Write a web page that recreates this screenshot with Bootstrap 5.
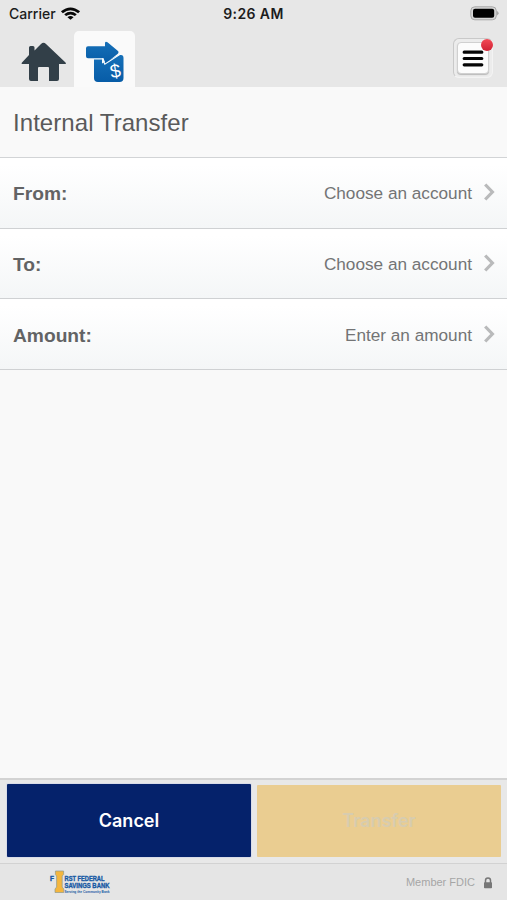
<!DOCTYPE html>
<html lang="en">
<head>
<meta charset="utf-8">
<meta name="viewport" content="width=device-width, initial-scale=1">
<title>Internal Transfer</title>
<link rel="stylesheet" href="https://cdn.jsdelivr.net/npm/bootstrap@5.3.0/dist/css/bootstrap.min.css">
<style>
body{font-family:"Liberation Sans",Arial,sans-serif;background:#f9f9f9;color:#595a5b;height:900px;overflow:hidden}
svg{display:block;flex:none}
.top-area{background:#e7e7e7;height:87px;flex:none}
.status{height:28px;font:500 14px/28px Inter,sans-serif;color:#1c1c1c;display:grid;grid-template-columns:1fr auto 1fr;padding:0 8px 0 9px}
.status-time{font-weight:600;letter-spacing:.4px;margin-right:1px}
.tabs-line{height:59px;padding:3px 13px 0 13px}
.tab-home{width:61px;padding:11px 0 0 8px}
.tab-transfer{width:61px;height:56px;background:#fafafa;border-radius:5px 5px 0 0;padding:10px 0 0 11px}
.menu-btn{width:40px;height:40px;margin-top:7px;margin-right:1px;border:1px solid;border-color:#c9c9c9 #f3f3f3 #f3f3f3 #c9c9c9;border-radius:6px;padding:3px;background:#ececec}
.menu-face{width:100%;height:100%;background:#fcfcfc;border:1px solid #d0d0d0;border-radius:4px;box-shadow:0 1px 1px #bbb}
.alert-dot{width:12px;height:12px;border-radius:50%;background:linear-gradient(#f34a56,#cf2133);top:0;right:-1px}
.page-title{font-size:24px;line-height:28px;height:71px;padding:22px 13px 0;margin:0;font-weight:400;border-bottom:1px solid #d2d4d6;letter-spacing:.06px;flex:none}
.list-group-flush>.list-group-item.field-row{height:70.7px;background:linear-gradient(#fff 10%,#f4f6f7);border:0;border-bottom:1px solid #cfd1d3;border-radius:0;padding:3px 12px 0 13px;color:#737475;font-size:17.2px}
.list-group-flush>.list-group-item.field-row:last-child{border-bottom-width:1px}
.field-label{font-size:19.2px;font-weight:700;color:#626364;padding-top:1px}
.field-row svg{margin-left:12px;margin-bottom:4px}
.actions{height:86px;background:#e8e8e8;border-top:2px solid #d3d3d3;border-bottom:1px solid #d2d2d2;padding:4px 6px 6px 7px;gap:6px;flex:none}
.actions .btn{border-radius:1px;font:600 18px/1 Inter,sans-serif;border:0;flex:1 1 0;padding:0;opacity:1}
.actions .btn-cancel,.actions .btn-cancel:hover{background:#05226b;color:#fff;box-shadow:0 0 0 1px #d9dce8}
.actions .btn-transfer{background:#eacd91;color:#d7ccaf;margin-top:1px}
.foot{height:36px;background:#e5e5e5;font-size:11px;color:#a5a5a5;padding:1px 14px 0 49px;flex:none}
</style>
<script src="https://cdn.jsdelivr.net/npm/bootstrap@5.3.0/dist/js/bootstrap.bundle.min.js"></script>
</head>
<body class="d-flex flex-column">
<header class="top-area">
  <div class="status align-items-center">
    <div class="d-flex align-items-center"><span>Carrier</span>
      <svg class="ms-1" width="21" height="15" viewBox="0 0 20 16" preserveAspectRatio="none" fill="none" stroke="#080808" stroke-width="2.7"><path d="M1.8 5.6Q10-1.7 18.2 5.6M4.9 8.7Q10 4.3 15.1 8.7"/><path d="M7.1 10.8Q10 8.5 12.9 10.8L10 13.7Z" fill="#080808" stroke="none"/></svg>
    </div>
    <div class="status-time">9:26 AM</div>
    <svg class="ms-auto" width="29" height="16" viewBox="0 0 29 16"><rect x=".8" y=".8" width="25.5" height="13" rx="4" fill="#d7d7d7" stroke="#a7a7a7"/><rect x="3" y="2.8" width="21.2" height="9" rx="2" fill="#000"/><path d="M27.2 5q2.6 2.2 0 4.4z" fill="#999"/></svg>
  </div>
  <nav class="tabs-line d-flex align-items-start">
    <a class="tab-home" href="#" aria-label="Home"><svg width="46" height="41" viewBox="0 0 46 41"><path d="M8 13V5.5Q8 4 9.5 4H12Q13.5 4 13.5 5.5V8.5L20 2Q22.5-.6 25 2L44.5 20.5Q45.5 22 44 22H38V37Q38 39 36 39H28V26Q28 25 27 25H18Q17 25 17 26V39H10Q8 39 8 37V22H1.5Q0 22 1 20.5Z" fill="#323f48"/></svg></a>
    <a class="tab-transfer" href="#" aria-label="Transfer"><svg width="40" height="43" viewBox="0 0 40 43"><defs><linearGradient id="blue" x2="0" y2="1"><stop stop-color="#1670b8"/><stop offset="1" stop-color="#075ca7"/></linearGradient></defs><path d="M9 17H17V22.5L34 14H36Q38.5 14 38.5 17V37Q38.5 41 34.5 41H13Q9 41 9 37Z" fill="url(#blue)"/><path d="M3 5.2H20V2Q20.3-.2 22.5 1.2L33 10Q34.2 11.5 32.5 13L20.5 22.5L18.5 17.2H3Q1 17.2 1 15.2V7.2Q1 5.2 3 5.2Z" fill="url(#blue)"/><path d="M9 17.9H17.8L19.8 23.2L35.5 13" stroke="#f5fbff" stroke-width="1.2" fill="none"/><text x="25" y="36.5" font-family="Liberation Sans,sans-serif" font-size="19" fill="#fff" transform="rotate(-10 30 30)">$</text></svg></a>
    <button class="menu-btn position-relative ms-auto" type="button" aria-label="Menu"><span class="menu-face d-flex align-items-center justify-content-center"><svg width="22" height="20" viewBox="0 0 22 20" stroke="#050505" stroke-width="3.2" stroke-linecap="round"><path d="M2.2 4.2H19.8M2.2 10.5H19.8M2.2 16.8H19.8"/></svg></span><span class="alert-dot position-absolute"></span></button>
  </nav>
</header>
<main class="flex-grow-1">
  <h1 class="page-title">Internal Transfer</h1>
  <div class="list-group list-group-flush">
    <a href="#" class="list-group-item field-row d-flex align-items-center"><span class="field-label me-auto">From:</span><span>Choose an account</span><svg width="11" height="18" viewBox="0 0 11 18" fill="none" stroke="#b9babb" stroke-width="3.2"><path d="M1.2 1.5L8.4 9L1.2 16.5"/></svg></a>
    <a href="#" class="list-group-item field-row d-flex align-items-center"><span class="field-label me-auto">To:</span><span>Choose an account</span><svg width="11" height="18" viewBox="0 0 11 18" fill="none" stroke="#b9babb" stroke-width="3.2"><path d="M1.2 1.5L8.4 9L1.2 16.5"/></svg></a>
    <a href="#" class="list-group-item field-row d-flex align-items-center"><span class="field-label me-auto">Amount:</span><span>Enter an amount</span><svg width="11" height="18" viewBox="0 0 11 18" fill="none" stroke="#b9babb" stroke-width="3.2"><path d="M1.2 1.5L8.4 9L1.2 16.5"/></svg></a>
  </div>
</main>
<div class="actions d-flex"><button class="btn btn-cancel" type="button">Cancel</button><button class="btn btn-transfer" type="button" disabled>Transfer</button></div>
<footer class="foot d-flex align-items-center">
  <svg width="66" height="27" viewBox="0 -1 66 27" overflow="visible" font-family="Liberation Sans,sans-serif" font-weight="700" fill="#1759a4"><text x="1" y="11" font-size="6.5" stroke="#1759a4" stroke-width=".4">F</text><path d="M6.4 1H14.6V4.5L13.2 6V17L14.8 19V22.5H6V19L7.6 17V6L6.4 4.5Z" fill="#f4b63e" stroke="#90998b" stroke-width=".7"/><g stroke="#1759a4" stroke-width=".35"><text x="15.5" y="11" font-size="6.3" textLength="40" lengthAdjust="spacingAndGlyphs">RST FEDERAL</text><text x="15.5" y="17.5" font-size="6.3" textLength="45" lengthAdjust="spacingAndGlyphs">SAVINGS BANK</text></g><text x="15.5" y="22.6" font-size="3.2" textLength="45" lengthAdjust="spacingAndGlyphs">Serving the Community Bank</text></svg>
  <span class="ms-auto">Member FDIC</span>
  <svg class="ms-2" width="10" height="12" viewBox="0 0 10 12"><path d="M2.5 6V3.5Q2.5 1 5 1T7.5 3.5V6" fill="none" stroke="#777" stroke-width="1.5"/><rect x="1" y="5.2" width="8" height="6" rx=".8" fill="#777"/></svg>
</footer>
</body>
</html>
